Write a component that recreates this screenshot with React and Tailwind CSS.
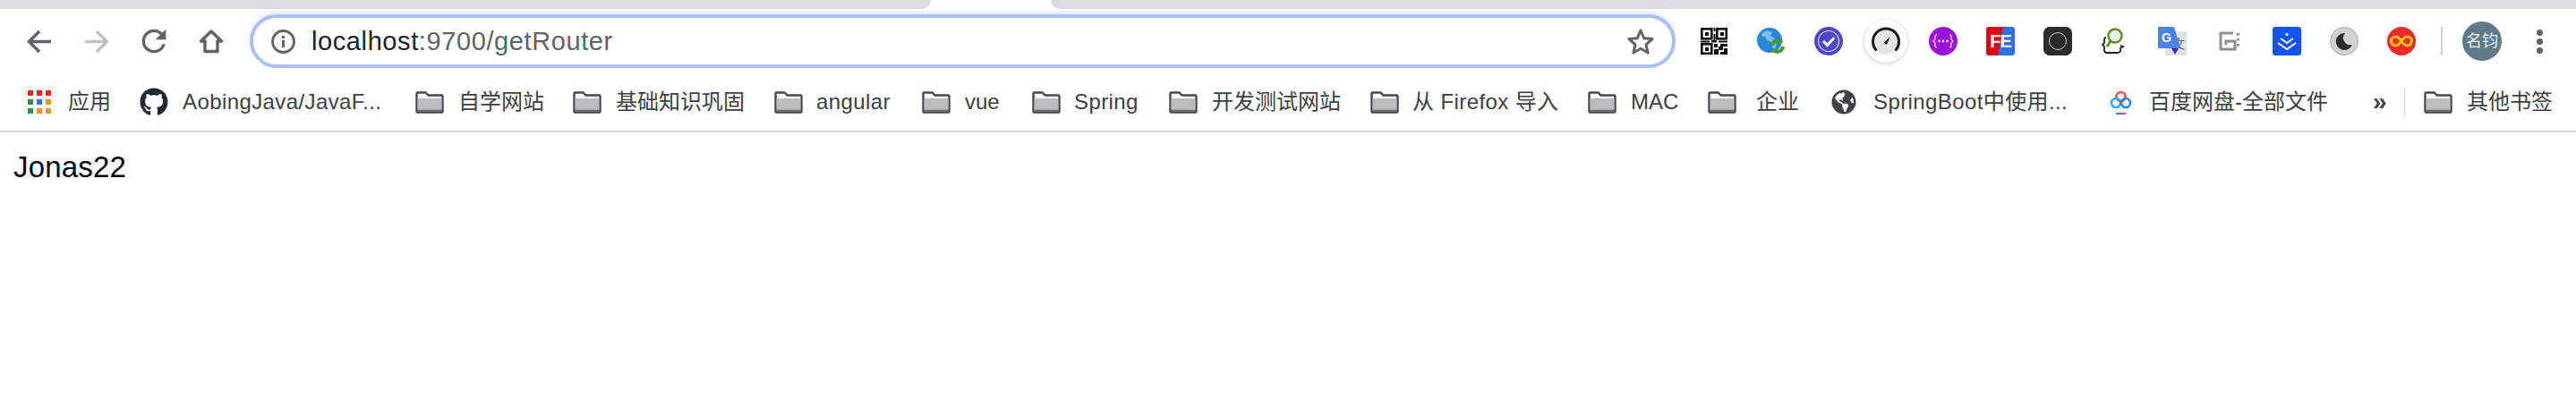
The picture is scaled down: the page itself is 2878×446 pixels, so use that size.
import React from 'react';
import { FaGithub, FaGlobeAmericas } from 'react-icons/fa';

const font = 'font-["Liberation_Sans","Noto_Sans_CJK_SC",sans-serif]';

const Folder = () => (
  <svg width="32" height="25" viewBox="0 0 32 25" className="shrink-0">
    <path d="M1.5 23V2.5q0-1 1-1h9l3 3h15q1 0 1 1V23q0 .5-1 .5h-27q-1 0-1-.5z" fill="#fff" stroke="#45484c" strokeWidth="2.4" />
    <rect x="2.6" y="8" width="26.8" height="12.5" fill="#bcbcbc" />
    <rect x="2.6" y="20.5" width="26.8" height="2" fill="#6d6d6d" />
  </svg>
);

const AppsGrid = () => (
  <svg width="26" height="26" viewBox="0 0 26 26" className="shrink-0">
    <rect x="0" y="0" width="6" height="6" fill="#e8262c" />
    <rect x="10" y="0" width="6" height="6" fill="#e8262c" />
    <rect x="20" y="0" width="6" height="6" fill="#e8262c" />
    <rect x="0" y="10" width="6" height="6" fill="#2f8f4e" />
    <rect x="10" y="10" width="6" height="6" fill="#2a72e5" />
    <rect x="20" y="10" width="6" height="6" fill="#e7981b" />
    <rect x="0" y="20" width="6" height="6" fill="#2f8f4e" />
    <rect x="10" y="20" width="6" height="6" fill="#e7981b" />
    <rect x="20" y="20" width="6" height="6" fill="#e7981b" />
  </svg>
);

const BaiduIcon = () => (
  <svg width="27" height="32" viewBox="0 0 27 32" className="shrink-0">
    <rect x="0.5" y="0.5" width="26" height="31" rx="5" fill="#fff" stroke="#f2f2f2" />
    <circle cx="13.5" cy="10" r="5" fill="none" stroke="#e8505b" strokeWidth="2.6" />
    <circle cx="8" cy="17" r="5" fill="none" stroke="#2fa8ec" strokeWidth="2.6" />
    <circle cx="19" cy="17" r="5" fill="none" stroke="#2f7fec" strokeWidth="2.6" />
    <rect x="8" y="28" width="6" height="2" fill="#2f7fec" />
    <rect x="14" y="28" width="5" height="2" fill="#e8505b" />
  </svg>
);

const bookmarks = [
  { icon: <AppsGrid />, label: '应用', box: 'w-[125px]', gap: 'gap-[19px]' },
  { icon: <FaGithub className="shrink-0 text-[32px] text-[#24292e]" />, label: 'AobingJava/JavaF...', box: 'w-[308px]', gap: 'gap-[16px]', track: 'tracking-[0.4px]' },
  { icon: <Folder />, label: '自学网站', box: 'w-[176px]', gap: 'gap-[16px]' },
  { icon: <Folder />, label: '基础知识巩固', box: 'w-[225px]', gap: 'gap-[16px]' },
  { icon: <Folder />, label: 'angular', box: 'w-[165px]', gap: 'gap-[15px]', track: 'tracking-[0.4px]' },
  { icon: <Folder />, label: 'vue', box: 'w-[123px]', gap: 'gap-[16px]' },
  { icon: <Folder />, label: 'Spring', box: 'w-[153px]', gap: 'gap-[15px]', track: 'tracking-[0.4px]' },
  { icon: <Folder />, label: '开发测试网站', box: 'w-[225px]', gap: 'gap-[16px]' },
  { icon: <Folder />, label: '从 Firefox 导入', box: 'w-[243px]', gap: 'gap-[15px]', track: 'tracking-[0.4px]' },
  { icon: <Folder />, label: 'MAC', box: 'w-[134px]', gap: 'gap-[16px]' },
  { icon: <Folder />, label: '企业', box: 'w-[138px]', gap: 'gap-[22px]' },
  { icon: <FaGlobeAmericas className="shrink-0 text-[28px] text-[#3f4246]" />, label: 'SpringBoot中使用...', box: 'w-[310px]', gap: 'gap-[19px]', track: 'tracking-[0.4px]' },
  { icon: <BaiduIcon />, label: '百度网盘-全部文件', box: 'w-[295px]', gap: 'gap-[18px]' },
];

const QrIcon = () => (
  <svg width="30" height="30" viewBox="0 0 30 30">
    <g fill="none" stroke="#111" strokeWidth="2.6">
      <rect x="1.3" y="1.3" width="11" height="11" />
      <rect x="18.3" y="1.3" width="10.5" height="11" />
      <rect x="1.3" y="18.3" width="11" height="10.5" />
    </g>
    <g fill="#111">
      <rect x="5" y="5" width="4" height="4" />
      <rect x="22" y="5" width="4" height="4" />
      <rect x="5" y="22" width="4" height="4" />
      <rect x="14.5" y="0" width="2" height="4" />
      <rect x="14.5" y="7" width="2" height="8" />
      <rect x="0" y="14.5" width="10" height="2" />
      <rect x="12" y="14" width="6" height="2.5" />
      <rect x="20" y="14.5" width="10" height="2" />
      <rect x="15" y="18" width="4" height="4" />
      <rect x="22" y="18" width="8" height="3" />
      <rect x="20" y="21" width="5" height="4" />
      <rect x="15" y="24" width="5" height="6" />
      <rect x="26" y="23" width="4" height="4" />
      <rect x="22" y="27" width="8" height="3" />
    </g>
  </svg>
);

const GlobeIcon = () => (
  <svg width="32" height="30" viewBox="0 0 32 30">
    <circle cx="14" cy="14" r="14" fill="#2a86d6" />
    <path d="M5 7l6-4 6 2-2 4 5 3-4 4-5-2-2-4-4-1zM17 17l5 1-2 6-3-2z" fill="#7cc0ee" />
    <path d="M17 20a6.500 6.500 0 0 1 11-3.500M29 21a6.500 6.500 0 0 1-11 4" fill="none" stroke="#4f9a1a" strokeWidth="4" />
  </svg>
);

const CheckCircle = () => (
  <svg width="32" height="32" viewBox="0 0 32 32">
    <circle cx="16" cy="16" r="16" fill="#4f45c9" />
    <circle cx="16" cy="16" r="11.5" fill="none" stroke="#d8d6f5" strokeWidth="1.2" />
    <path d="M10 16l4.5 4.5L22.5 12" fill="none" stroke="#fff" strokeWidth="3" />
  </svg>
);

const SpeedIcon = () => (
  <div className="flex h-12 w-12 items-center justify-center rounded-full bg-white shadow-[0_1px_5px_rgba(0,0,0,0.22)]">
    <svg width="32" height="32" viewBox="0 0 32 32">
      <circle cx="16" cy="16" r="15" fill="#e3e5e2" />
      <path d="M5.5 26.5a14.5 14.5 0 1 1 21 0" fill="none" stroke="#1c1c1c" strokeWidth="3" />
      <path d="M13.5 18l7-7-3.5 9z" fill="#1c1c1c" />
    </svg>
  </div>
);

const BraceCircle = () => (
  <svg width="32" height="32" viewBox="0 0 32 32">
    <circle cx="16" cy="16" r="16" fill="#9a12d8" />
    <path d="M9 9q-2 0-2 2v3l-2 2 2 2v3q0 2 2 2M23 9q2 0 2 2v3l2 2-2 2v3q0 2-2 2" fill="none" stroke="#e5b5f5" strokeWidth="1.5" />
    <circle cx="11.5" cy="16" r="1.4" fill="#f3dcfb" />
    <circle cx="16" cy="16" r="1.4" fill="#f3dcfb" />
    <circle cx="20.5" cy="16" r="1.4" fill="#f3dcfb" />
  </svg>
);

const FeIcon = () => (
  <div className="flex h-8 w-8 items-center justify-center overflow-hidden rounded-[3px] bg-[linear-gradient(100deg,#e60012_50%,#2f6fe4_50%)]">
    <span className={`${font} text-[20px] leading-none font-bold tracking-[-1px] text-white`}>FE</span>
  </div>
);

const DarkRing = () => (
  <div className="flex h-8 w-8 items-center justify-center rounded-[7px] bg-[#2b2b2b]">
    <div className="h-5 w-5 rounded-full border border-[#c9c9c9]" />
  </div>
);

const LensBraces = () => (
  <svg width="32" height="32" viewBox="0 0 32 32">
    <path d="M6 12q-2 0-2 2v4l-2 2 2 2v4q0 3 3 3h12q2 0 3-2v-3l3-2-3-1" fill="none" stroke="#222" strokeWidth="1.8" />
    <circle cx="16" cy="10" r="7.5" fill="#e4efe9" stroke="#5f8a2a" strokeWidth="2.4" />
    <path d="M11 16l-4 6" stroke="#5f8a2a" strokeWidth="3" />
  </svg>
);

const TranslateIcon = () => (
  <div className="relative h-8 w-8">
    <div className="absolute top-[5px] left-[8px] flex h-[27px] w-[24px] items-center justify-end rounded-[1px] bg-[#dfe1e3] pr-[2px]">
      <span className={`${font} text-[14px] leading-none text-[#5f6368]`}>文</span>
    </div>
    <svg width="32" height="32" viewBox="0 0 32 32" className="absolute top-0 left-0">
      <path d="M1 0h17l7 24H1q-1 0-1-1V1q0-1 1-1z" fill="#4a80e8" />
      <path d="M15 24h8l-4 7z" fill="#3e2f9f" />
    </svg>
    <span className={`${font} absolute top-[5px] left-[4px] text-[14px] leading-none font-bold text-white`}>G</span>
  </div>
);

const SpiralIcon = () => (
  <svg width="24" height="22" viewBox="0 0 24 22">
    <path d="M16 2H2v18h16v-9H8v4" fill="none" stroke="#8f8f8f" strokeWidth="3" />
    <rect x="20" y="2" width="3" height="2.5" fill="#8f8f8f" />
    <rect x="20" y="8" width="3" height="2.5" fill="#8f8f8f" />
    <rect x="20" y="14" width="3" height="2.5" fill="#8f8f8f" />
  </svg>
);

const BlueChevrons = () => (
  <svg width="32" height="32" viewBox="0 0 32 32">
    <rect width="32" height="32" rx="3" fill="#0f55f5" />
    <circle cx="16" cy="8.5" r="1.6" fill="#fff" />
    <path d="M9 13l7 5 7-5M6 18l10 7 10-7" fill="none" stroke="#fff" strokeWidth="2" />
  </svg>
);

const MoonIcon = () => (
  <svg width="32" height="32" viewBox="0 0 32 32">
    <circle cx="16" cy="16" r="15.5" fill="#d2d2d2" stroke="#a8a8a8" />
    <path d="M17 7a9.5 9.5 0 1 0 8 13 8 8 0 0 1-8-13z" fill="#2e2e2e" />
  </svg>
);

const InfinityIcon = () => (
  <svg width="32" height="32" viewBox="0 0 32 32">
    <circle cx="16" cy="16" r="16" fill="#ee2b2b" />
    <path d="M16 16c-2-3-4-5-6.500-5a5 5 0 0 0 0 10c2.500 0 4.500-2 6.500-5s4-5 6.500-5a5 5 0 0 1 0 10c-2.500 0-4.500-2-6.500-5z" fill="none" stroke="#f6c21a" strokeWidth="3" />
  </svg>
);

const extensions = [
  <QrIcon />, <GlobeIcon />, <CheckCircle />, <SpeedIcon />, <BraceCircle />, <FeIcon />, <DarkRing />,
  <LensBraces />, <TranslateIcon />, <SpiralIcon />, <BlueChevrons />, <MoonIcon />, <InfinityIcon />,
];

const NavButton = ({ children }) => (
  <div className="flex h-16 w-16 shrink-0 items-center justify-center">{children}</div>
);

const App = () => {
  return (
    <div className={`${font} h-screen w-full overflow-hidden bg-white`}>
      {/* tab strip */}
      <div className="flex h-[10px]">
        <div className="w-[1040px] rounded-br-[20px] bg-[#d9dce1]" />
        <div className="w-[134px]" />
        <div className="flex-1 rounded-bl-[20px] bg-[#d9dce1]" />
      </div>

      {/* toolbar */}
      <div className="flex h-[72px] items-center pl-3">
        <NavButton>
          <svg width="28" height="27" viewBox="0 0 28 27" fill="none" stroke="#5f6368" strokeWidth="3.4">
            <path d="M27 13.500H3M14 2L2.500 13.500 14 25" />
          </svg>
        </NavButton>
        <NavButton>
          <svg width="28" height="27" viewBox="0 0 28 27" fill="none" stroke="#bdc1c6" strokeWidth="3.400">
            <path d="M1 13.500h24M14 2l11.500 11.500L14 25" />
          </svg>
        </NavButton>
        <NavButton>
          <svg width="40" height="40" viewBox="0 0 24 24" fill="#5f6368">
            <path d="M17.65 6.35A7.958 7.958 0 0 0 12 4c-4.42 0-7.99 3.580-7.99 8s3.570 8 7.990 8c3.730 0 6.840-2.550 7.730-6h-2.080A5.990 5.990 0 0 1 12 18c-3.310 0-6-2.690-6-6s2.690-6 6-6c1.660 0 3.140.69 4.220 1.780L13 11h7V4l-2.350 2.350z" />
          </svg>
        </NavButton>
        <NavButton>
          <svg width="28" height="28" viewBox="0 0 28 28" fill="none" stroke="#5f6368" strokeWidth="3.400" strokeLinejoin="round">
            <path d="M14 3L2.500 14H7v11.500h14V14h4.500z" />
          </svg>
        </NavButton>

        {/* address bar */}
        <div className="ml-[11px] flex h-[60px] w-[1593px] shrink-0 items-center rounded-full border-[4px] border-[#a9c0f2] pr-[19px] pl-[20px] shadow-[0_-3px_4px_rgba(169,192,242,0.35)]">
          <svg width="27" height="27" viewBox="0 0 27 27" className="shrink-0">
            <circle cx="13.500" cy="13.500" r="12" fill="none" stroke="#5f6368" strokeWidth="2.800" />
            <rect x="12" y="12" width="3" height="8" fill="#5f6368" />
            <rect x="12" y="7" width="3" height="3" fill="#5f6368" />
          </svg>
          <div className="ml-[18px] flex-1 text-[29px] leading-none tracking-[0.6px] whitespace-nowrap text-[#5f6368]">
            <span className="text-[#202124]">localhost</span>:9700/getRouter
          </div>
          <svg width="32" height="30" viewBox="0 0 32 30" className="shrink-0">
            <path d="M16 3l3.800 8.800 9.200.8-7 6.200 2.100 9.200L16 23.200 7.900 28l2.100-9.200-7-6.200 9.200-.8z" fill="none" stroke="#5f6368" strokeWidth="3" strokeLinejoin="round" />
          </svg>
        </div>

        {/* extensions */}
        <div className="ml-[11px] flex">
          {extensions.map((icon, i) => (
            <NavButton key={i}>{icon}</NavButton>
          ))}
        </div>
        <div className="ml-[12px] h-8 w-[2px] bg-[#d0d1d3]" />
        <div className="ml-[22px] flex h-11 w-11 shrink-0 items-center justify-center rounded-full bg-[#617a87] text-[18px] whitespace-nowrap text-[#e8eef0]">
          名钧
        </div>
        <div className="ml-[10px] flex h-16 w-16 flex-col items-center justify-center gap-[3px]">
          <div className="h-[7px] w-[7px] rounded-full bg-[#5f6368]" />
          <div className="h-[7px] w-[7px] rounded-full bg-[#5f6368]" />
          <div className="h-[7px] w-[7px] rounded-full bg-[#5f6368]" />
        </div>
      </div>

      {/* bookmarks bar */}
      <div className="box-content flex h-[64px] items-center border-b-2 border-[#d5d5d5] pl-[31px] text-[24px] leading-none whitespace-nowrap text-[#3c4043]">
        {bookmarks.map((b) => (
          <div key={b.label} className={`flex shrink-0 items-center ${b.box} ${b.gap}`}>
            {b.icon}
            <span className={b.track}>{b.label}</span>
          </div>
        ))}
        <div className="w-[35px] shrink-0 text-[28px] font-bold">»</div>
        <div className="h-8 w-[1px] shrink-0 bg-[#d0d1d3]" />
        <div className="ml-[21px] flex shrink-0 items-center gap-[16px]">
          <Folder />
          <span>其他书签</span>
        </div>
      </div>

      {/* page content */}
      <div className="px-[15px] pt-[20px] text-[33px] leading-[37px] tracking-[0.2px] text-black">Jonas22</div>
    </div>
  );
};

export default App;
